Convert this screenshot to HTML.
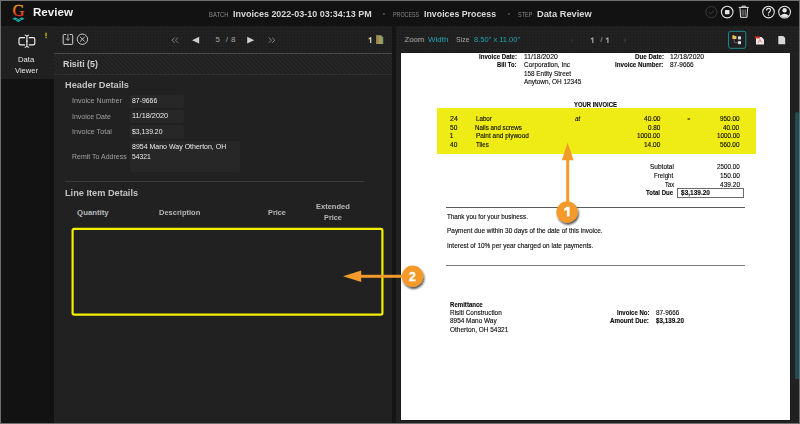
<!DOCTYPE html>
<html><head><meta charset="utf-8"><title>Review</title>
<style>
html,body{margin:0;padding:0;}
body{width:800px;height:424px;overflow:hidden;position:relative;background:#6e6e6e;font-family:"Liberation Sans",sans-serif;}
.a{position:absolute;}
.t{position:absolute;white-space:nowrap;transform-origin:0 0;font-family:"Liberation Sans",sans-serif;}
.grid{background-color:#222222;background-image:linear-gradient(to right,rgba(0,0,0,0.10) 1px,transparent 1px),linear-gradient(to bottom,rgba(0,0,0,0.10) 1px,transparent 1px);background-size:3px 3px;}
.hatch{background-color:#232323;background-image:repeating-linear-gradient(45deg,#1f1f1f 0px,#222 0.8px,#2a2a2a 1.6px,#222 2.4px,#1f1f1f 3.1px);}
.inp{background:#272727;border-radius:2px;}
.d{-webkit-text-stroke:0.12px #0a0a0a;}
svg{position:absolute;left:0;top:0;}
</style></head><body>
<!-- header -->
<div class="a" style="left:1px;top:1px;width:798px;height:25px;background:#121212"></div>
<!-- sidebar -->
<div class="a" style="left:1px;top:26px;width:53px;height:53px;background:#202020"></div>
<div class="a" style="left:1px;top:79px;width:53px;height:344px;background:#121212"></div>
<!-- left panel -->
<div class="a grid" style="left:54px;top:26px;width:338px;height:27px;"></div>
<div class="a" style="left:54px;top:53px;width:338px;height:1px;background:#474747"></div>
<div class="a hatch" style="left:54px;top:54px;width:338px;height:20px;"></div>
<div class="a" style="left:54px;top:74px;width:338px;height:1px;background:#303030"></div>
<div class="a" style="left:54px;top:75px;width:338px;height:348px;background:#212121"></div>
<div class="a" style="left:392px;top:26px;width:4px;height:397px;background:#141414"></div>
<!-- inputs -->
<div class="a inp" style="left:130px;top:95px;width:54px;height:13px;"></div>
<div class="a inp" style="left:130px;top:110px;width:54px;height:13px;"></div>
<div class="a inp" style="left:130px;top:125px;width:54px;height:13px;"></div>
<div class="a inp" style="left:130px;top:141px;width:110px;height:31px;"></div>
<div class="a" style="left:65px;top:181px;width:299px;height:1px;background:#3a3a3a"></div>

<!-- right panel -->
<div class="a grid" style="left:396px;top:26px;width:403px;height:27px;"></div>
<div class="a" style="left:396px;top:53px;width:403px;height:370px;background:#212121"></div>
<div class="a" style="left:401px;top:53px;width:389px;height:367px;background:#ffffff;box-shadow:0 0 0 1px #191919"></div>
<div class="a" style="left:795px;top:112px;width:4px;height:267px;background:#1d4e51;border-radius:2px 2px 0 0"></div>
<!-- doc shapes -->
<div class="a" style="left:437px;top:108px;width:319px;height:46px;background:#efec15"></div>
<div class="a" style="left:446px;top:207px;width:299px;height:1px;background:#5a5a5a"></div>
<div class="a" style="left:677px;top:188px;width:65px;height:7.5px;border:1px solid #6a6a6a"></div>
<div class="a" style="left:446px;top:265px;width:299px;height:1px;background:#7a7a7a"></div>
<div class="t" style="left:33.35px;top:7.15px;font-size:11.00px;line-height:11.00px;color:#f2f2f2;font-weight:700;transform:scaleX(1.0525);">Review</div>
<div class="t" style="left:208.55px;top:11.59px;font-size:6.90px;line-height:6.90px;color:#8a8a8a;transform:scaleX(0.8503);">BATCH</div>
<div class="t" style="left:232.60px;top:8.68px;font-size:9.70px;line-height:9.70px;color:#d9d9d9;font-weight:700;transform:scaleX(0.9258);">Invoices 2022-03-10 03:34:13 PM</div>
<div class="t" style="left:393.37px;top:11.52px;font-size:6.90px;line-height:6.90px;color:#8a8a8a;transform:scaleX(0.7751);">PROCESS</div>
<div class="t" style="left:424.07px;top:8.68px;font-size:9.70px;line-height:9.70px;color:#d9d9d9;font-weight:700;transform:scaleX(0.9103);">Invoices Process</div>
<div class="t" style="left:518.15px;top:11.56px;font-size:6.90px;line-height:6.90px;color:#8a8a8a;transform:scaleX(0.7954);">STEP</div>
<div class="t" style="left:536.99px;top:8.68px;font-size:9.70px;line-height:9.70px;color:#d9d9d9;font-weight:700;transform:scaleX(0.9576);">Data Review</div>
<div class="t" style="left:18.12px;top:55.68px;font-size:7.70px;line-height:7.70px;color:#e8e8e8;transform:scaleX(0.9928);">Data</div>
<div class="t" style="left:14.93px;top:66.88px;font-size:7.70px;line-height:7.70px;color:#e8e8e8;transform:scaleX(0.9839);">Viewer</div>
<div class="t" style="left:63.32px;top:58.53px;font-size:9.90px;line-height:9.90px;color:#cfcfcf;font-weight:700;transform:scaleX(0.8961);">Risiti (5)</div>
<div class="t" style="left:215.38px;top:35.98px;font-size:8.00px;line-height:8.00px;color:#a8a8a8;">5</div>
<div class="t" style="left:225.82px;top:35.98px;font-size:8.00px;line-height:8.00px;color:#a8a8a8;">/</div>
<div class="t" style="left:230.90px;top:35.98px;font-size:8.00px;line-height:8.00px;color:#a8a8a8;">8</div>
<div class="t" style="left:368.01px;top:36.23px;font-size:8.00px;line-height:8.00px;color:transparent;">1</div>
<div class="t" style="left:65.24px;top:79.93px;font-size:9.60px;line-height:9.60px;color:#c2c2c2;font-weight:700;transform:scaleX(0.9594);">Header Details</div>
<div class="t" style="left:72.29px;top:97.03px;font-size:7.40px;line-height:7.40px;color:#a0a0a0;transform:scaleX(0.9643);">Invoice Number</div>
<div class="t" style="left:72.32px;top:112.62px;font-size:7.40px;line-height:7.40px;color:#a0a0a0;transform:scaleX(0.9436);">Invoice Date</div>
<div class="t" style="left:72.26px;top:128.23px;font-size:7.40px;line-height:7.40px;color:#a0a0a0;transform:scaleX(0.9711);">Invoice Total</div>
<div class="t" style="left:72.17px;top:153.08px;font-size:7.40px;line-height:7.40px;color:#a0a0a0;transform:scaleX(0.9467);">Remit To Address</div>
<div class="t" style="left:131.84px;top:97.18px;font-size:7.40px;line-height:7.40px;color:#ececec;transform:scaleX(0.9303);">87-9666</div>
<div class="t" style="left:131.69px;top:112.11px;font-size:7.40px;line-height:7.40px;color:#ececec;transform:scaleX(0.9932);">11/18/2020</div>
<div class="t" style="left:131.58px;top:127.83px;font-size:7.40px;line-height:7.40px;color:#ececec;transform:scaleX(0.9269);">$3,139.20</div>
<div class="t" style="left:131.72px;top:143.18px;font-size:7.40px;line-height:7.40px;color:#ececec;transform:scaleX(0.9467);">8954 Mano Way Otherton, OH</div>
<div class="t" style="left:131.73px;top:153.08px;font-size:7.40px;line-height:7.40px;color:#ececec;transform:scaleX(0.9193);">54321</div>
<div class="t" style="left:64.79px;top:187.72px;font-size:9.60px;line-height:9.60px;color:#c2c2c2;font-weight:700;transform:scaleX(0.9583);">Line Item Details</div>
<div class="t" style="left:77.09px;top:208.53px;font-size:7.80px;line-height:7.80px;color:#b8b8b8;font-weight:700;">Quantity</div>
<div class="t" style="left:159.16px;top:208.77px;font-size:7.80px;line-height:7.80px;color:#b8b8b8;font-weight:700;transform:scaleX(0.9612);">Description</div>
<div class="t" style="left:268.00px;top:208.69px;font-size:7.80px;line-height:7.80px;color:#b8b8b8;font-weight:700;transform:scaleX(0.9382);">Price</div>
<div class="t" style="left:315.77px;top:202.71px;font-size:7.80px;line-height:7.80px;color:#b8b8b8;font-weight:700;transform:scaleX(0.9630);">Extended</div>
<div class="t" style="left:323.85px;top:213.69px;font-size:7.80px;line-height:7.80px;color:#b8b8b8;font-weight:700;transform:scaleX(0.9382);">Price</div>
<div class="t" style="left:404.43px;top:36.38px;font-size:7.80px;line-height:7.80px;color:#a8a8a8;">Zoom</div>
<div class="t" style="left:427.75px;top:36.38px;font-size:7.80px;line-height:7.80px;color:#22a5b3;transform:scaleX(1.0250);">Width</div>
<div class="t" style="left:456.30px;top:36.38px;font-size:7.80px;line-height:7.80px;color:#a8a8a8;transform:scaleX(0.8901);">Size</div>
<div class="t" style="left:474.33px;top:36.38px;font-size:7.80px;line-height:7.80px;color:#22a5b3;transform:scaleX(0.9638);">8.50" x 11.00"</div>
<div class="t" style="left:590.20px;top:36.18px;font-size:8.00px;line-height:8.00px;color:transparent;">1</div>
<div class="t" style="left:600.21px;top:36.18px;font-size:8.00px;line-height:8.00px;color:#a8a8a8;">/</div>
<div class="t" style="left:605.12px;top:36.18px;font-size:8.00px;line-height:8.00px;color:transparent;">1</div>
<div class="t d" style="left:478.71px;top:53.52px;font-size:6.70px;line-height:6.70px;color:#0a0a0a;font-weight:700;transform:scaleX(0.9140);">Invoice Date:</div>
<div class="t d" style="left:523.64px;top:53.86px;font-size:6.70px;line-height:6.70px;color:#0a0a0a;transform:scaleX(1.0244);">11/18/2020</div>
<div class="t d" style="left:497.37px;top:62.07px;font-size:6.70px;line-height:6.70px;color:#0a0a0a;font-weight:700;transform:scaleX(0.8773);">Bill To:</div>
<div class="t d" style="left:523.87px;top:61.84px;font-size:6.70px;line-height:6.70px;color:#0a0a0a;transform:scaleX(0.9677);">Corporation, Inc</div>
<div class="t d" style="left:523.67px;top:70.56px;font-size:6.70px;line-height:6.70px;color:#0a0a0a;transform:scaleX(0.9506);">158 Entity Street</div>
<div class="t d" style="left:523.75px;top:78.81px;font-size:6.70px;line-height:6.70px;color:#0a0a0a;transform:scaleX(0.9566);">Anytown, OH 12345</div>
<div class="t d" style="left:634.95px;top:53.56px;font-size:6.70px;line-height:6.70px;color:#0a0a0a;font-weight:700;transform:scaleX(0.9285);">Due Date:</div>
<div class="t d" style="left:669.55px;top:53.82px;font-size:6.70px;line-height:6.70px;color:#0a0a0a;transform:scaleX(1.0142);">12/18/2020</div>
<div class="t d" style="left:615.19px;top:61.94px;font-size:6.70px;line-height:6.70px;color:#0a0a0a;font-weight:700;transform:scaleX(0.9235);">Invoice Number:</div>
<div class="t d" style="left:670.42px;top:61.86px;font-size:6.70px;line-height:6.70px;color:#0a0a0a;transform:scaleX(0.9653);">87-9666</div>
<div class="t d" style="left:573.61px;top:101.88px;font-size:6.70px;line-height:6.70px;color:#0a0a0a;font-weight:700;transform:scaleX(0.8804);">YOUR INVOICE</div>
<div class="t d" style="left:449.67px;top:115.71px;font-size:6.70px;line-height:6.70px;color:#0a0a0a;transform:scaleX(1.0484);">24</div>
<div class="t d" style="left:475.60px;top:115.52px;font-size:6.70px;line-height:6.70px;color:#0a0a0a;transform:scaleX(0.9295);">Labor</div>
<div class="t d" style="left:575.02px;top:116.20px;font-size:6.70px;line-height:6.70px;color:#0a0a0a;font-style:italic;transform:scaleX(0.9535);">at</div>
<div class="t d" style="left:643.71px;top:115.71px;font-size:6.70px;line-height:6.70px;color:#0a0a0a;transform:scaleX(0.9853);">40.00</div>
<div class="t d" style="left:687.20px;top:116.83px;font-size:5.00px;line-height:5.00px;color:#0a0a0a;">=</div>
<div class="t d" style="left:720.17px;top:115.71px;font-size:6.70px;line-height:6.70px;color:#0a0a0a;transform:scaleX(0.9520);">950.00</div>
<div class="t d" style="left:449.87px;top:124.77px;font-size:6.70px;line-height:6.70px;color:#0a0a0a;transform:scaleX(0.9844);">50</div>
<div class="t d" style="left:475.34px;top:124.64px;font-size:6.70px;line-height:6.70px;color:#0a0a0a;transform:scaleX(0.9277);">Nails and screws</div>
<div class="t d" style="left:647.70px;top:124.79px;font-size:6.70px;line-height:6.70px;color:#0a0a0a;transform:scaleX(0.9521);">0.80</div>
<div class="t d" style="left:723.21px;top:124.80px;font-size:6.70px;line-height:6.70px;color:#0a0a0a;transform:scaleX(0.9578);">40.00</div>
<div class="t d" style="left:449.49px;top:132.97px;font-size:6.70px;line-height:6.70px;color:#0a0a0a;">1</div>
<div class="t d" style="left:475.71px;top:133.06px;font-size:6.70px;line-height:6.70px;color:#0a0a0a;transform:scaleX(0.9680);">Paint and plywood</div>
<div class="t d" style="left:636.74px;top:133.06px;font-size:6.70px;line-height:6.70px;color:#0a0a0a;transform:scaleX(0.9570);">1000.00</div>
<div class="t d" style="left:716.55px;top:133.07px;font-size:6.70px;line-height:6.70px;color:#0a0a0a;transform:scaleX(0.9434);">1000.00</div>
<div class="t d" style="left:449.59px;top:141.65px;font-size:6.70px;line-height:6.70px;color:#0a0a0a;transform:scaleX(0.9762);">40</div>
<div class="t d" style="left:475.65px;top:141.81px;font-size:6.70px;line-height:6.70px;color:#0a0a0a;transform:scaleX(0.9164);">Tiles</div>
<div class="t d" style="left:643.83px;top:141.71px;font-size:6.70px;line-height:6.70px;color:#0a0a0a;transform:scaleX(0.9720);">14.00</div>
<div class="t d" style="left:720.33px;top:141.68px;font-size:6.70px;line-height:6.70px;color:#0a0a0a;transform:scaleX(0.9492);">560.00</div>
<div class="t d" style="left:650.35px;top:163.73px;font-size:6.70px;line-height:6.70px;color:#0a0a0a;transform:scaleX(0.9732);">Subtotal</div>
<div class="t d" style="left:716.95px;top:163.73px;font-size:6.70px;line-height:6.70px;color:#0a0a0a;transform:scaleX(0.9367);">2500.00</div>
<div class="t d" style="left:654.31px;top:172.87px;font-size:6.70px;line-height:6.70px;color:#0a0a0a;transform:scaleX(0.9264);">Freight</div>
<div class="t d" style="left:719.55px;top:172.90px;font-size:6.70px;line-height:6.70px;color:#0a0a0a;transform:scaleX(0.9745);">150.00</div>
<div class="t d" style="left:664.71px;top:181.70px;font-size:6.70px;line-height:6.70px;color:#0a0a0a;transform:scaleX(0.8884);">Tax</div>
<div class="t d" style="left:719.86px;top:181.59px;font-size:6.70px;line-height:6.70px;color:#0a0a0a;transform:scaleX(0.9817);">439.20</div>
<div class="t d" style="left:646.13px;top:190.43px;font-size:6.70px;line-height:6.70px;color:#0a0a0a;font-weight:700;transform:scaleX(0.9036);">Total Due</div>
<div class="t d" style="left:680.55px;top:190.41px;font-size:6.70px;line-height:6.70px;color:#0a0a0a;font-weight:700;transform:scaleX(0.9747);">$3,139.20</div>
<div class="t d" style="left:446.62px;top:214.35px;font-size:6.70px;line-height:6.70px;color:#0a0a0a;transform:scaleX(0.9423);">Thank you for your business.</div>
<div class="t d" style="left:446.67px;top:228.06px;font-size:6.70px;line-height:6.70px;color:#0a0a0a;transform:scaleX(0.9644);">Payment due within 30 days of the date of this invoice.</div>
<div class="t d" style="left:446.83px;top:242.71px;font-size:6.70px;line-height:6.70px;color:#0a0a0a;transform:scaleX(0.9624);">Interest of 10% per year charged on late payments.</div>
<div class="t d" style="left:450.17px;top:301.70px;font-size:6.70px;line-height:6.70px;color:#0a0a0a;font-weight:700;transform:scaleX(0.9083);">Remittance</div>
<div class="t d" style="left:450.32px;top:309.94px;font-size:6.70px;line-height:6.70px;color:#0a0a0a;transform:scaleX(0.9603);">Risiti Construction</div>
<div class="t d" style="left:450.42px;top:318.21px;font-size:6.70px;line-height:6.70px;color:#0a0a0a;transform:scaleX(0.9634);">8954 Mano Way</div>
<div class="t d" style="left:450.15px;top:326.95px;font-size:6.70px;line-height:6.70px;color:#0a0a0a;transform:scaleX(0.9674);">Otherton, OH 54321</div>
<div class="t d" style="left:616.72px;top:310.05px;font-size:6.70px;line-height:6.70px;color:#0a0a0a;font-weight:700;transform:scaleX(0.9015);">Invoice No:</div>
<div class="t d" style="left:655.77px;top:309.91px;font-size:6.70px;line-height:6.70px;color:#0a0a0a;transform:scaleX(0.9484);">87-9666</div>
<div class="t d" style="left:610.13px;top:318.38px;font-size:6.70px;line-height:6.70px;color:#0a0a0a;font-weight:700;transform:scaleX(0.9268);">Amount Due:</div>
<div class="t d" style="left:656.44px;top:318.41px;font-size:6.70px;line-height:6.70px;color:#0a0a0a;font-weight:700;transform:scaleX(0.9412);">$3,139.20</div>
<svg width="800" height="424" viewBox="0 0 800 424">
 <defs>
  <linearGradient id="gg" gradientUnits="userSpaceOnUse" x1="0" y1="5" x2="0" y2="17">
   <stop offset="0" stop-color="#e9a21c"/><stop offset="0.45" stop-color="#e8701e"/><stop offset="1" stop-color="#e0221c"/>
  </linearGradient>
  <filter id="sh" x="-30%" y="-30%" width="160%" height="160%">
   <feGaussianBlur in="SourceAlpha" stdDeviation="0.9"/>
   <feOffset dx="1.1" dy="1.5" result="o"/>
   <feComponentTransfer><feFuncA type="linear" slope="0.7"/></feComponentTransfer>
   <feMerge><feMergeNode/><feMergeNode in="SourceGraphic"/></feMerge>
  </filter>
 </defs>
 <rect x="72.6" y="228.9" width="309.8" height="85.8" rx="1.6" fill="none" stroke="#f2f000" stroke-width="2.2"/>
 <!-- logo -->
 <text x="18.5" y="16.4" text-anchor="middle" font-family="Liberation Serif" font-size="16.4" fill="url(#gg)" stroke="url(#gg)" stroke-width="0.35">G</text>
 <g fill="#19afa6">
  <path d="M12.4 18.8 L15.2 17.3 L18 18.8 L15.2 20.3 Z"/>
  <path d="M19 18.8 L21.8 17.3 L24.6 18.8 L21.8 20.3 Z"/>
  <path d="M15.6 20.4 L18.4 18.9 L21.2 20.4 L18.4 21.9 Z"/>
 </g>
 <rect x="383.3" y="13.3" width="1.3" height="1.3" fill="#8a8a8a"/>
 <rect x="508.3" y="13.3" width="1.3" height="1.3" fill="#8a8a8a"/>
 <!-- header right icons -->
 <circle cx="711.4" cy="12.1" r="5.6" fill="none" stroke="#3a3a3a" stroke-width="1"/>
 <path d="M708.8 12.2 L710.7 14.1 L714.2 10.2" fill="none" stroke="#3a3a3a" stroke-width="1"/>
 <circle cx="727.2" cy="12.1" r="5.8" fill="none" stroke="#e6e6e6" stroke-width="1.1"/>
 <rect x="724.9" y="9.9" width="4.6" height="4.4" rx="0.8" fill="#e6e6e6"/>
 <g fill="none" stroke="#e6e6e6" stroke-width="1">
  <path d="M738.8 7.4 H748.8"/>
  <path d="M742 7.2 V6.2 H745.6 V7.2"/>
  <path d="M740 8.2 L740.6 17.3 H747 L747.6 8.2"/>
 </g>
 <g stroke="#d0d0d0" stroke-width="0.55">
  <path d="M742.2 9.6 V15.8 M743.8 9.6 V15.8 M745.4 9.6 V15.8"/>
 </g>
 <circle cx="768.5" cy="12.1" r="5.8" fill="none" stroke="#e6e6e6" stroke-width="1.1"/>
 <path d="M766.5 10.4 Q766.5 8.3 768.5 8.3 Q770.5 8.3 770.5 10.1 Q770.5 11.3 769.3 11.9 Q768.5 12.4 768.5 13.5" fill="none" stroke="#e6e6e6" stroke-width="1.15"/>
 <rect x="767.9" y="14.5" width="1.2" height="1.2" fill="#e6e6e6"/>
 <circle cx="784.6" cy="12.1" r="5.9" fill="none" stroke="#e6e6e6" stroke-width="1.1"/>
 <circle cx="784.6" cy="10.2" r="2.2" fill="#e6e6e6"/>
 <path d="M780.3 15.8 Q784.6 11.8 788.9 15.8 Q784.6 19.2 780.3 15.8 Z" fill="#e6e6e6"/>
 <!-- sidebar icon -->
 <g fill="none" stroke="#f2f2f2" stroke-width="1.15">
  <path d="M25.0 37.6 H20.6 Q19.0 37.6 19.0 39.2 V43.2 Q19.0 44.8 20.6 44.8 H25.0"/>
  <path d="M28.8 37.6 H33.2 Q34.8 37.6 34.8 39.2 V43.2 Q34.8 44.8 33.2 44.8 H28.8"/>
  <path d="M26.9 36 V46.4"/>
  <path d="M24.7 35.1 Q26.9 35.1 26.9 36.4 Q26.9 35.1 29.1 35.1 M24.7 47.3 Q26.9 47.3 26.9 46 Q26.9 47.3 29.1 47.3" stroke-width="1"/>
  <path d="M26 41.2 H27.8" stroke-width="0.9"/>
 </g>
 <rect x="45.4" y="32.7" width="1.3" height="3.6" fill="#c8c400"/>
 <rect x="45.4" y="37" width="1.3" height="1.2" fill="#c8c400"/>
 <!-- left toolbar icons -->
 <g fill="none" stroke="#c8c8c8" stroke-width="1">
  <path d="M66.2 34.5 H64.1 Q63.2 34.5 63.2 35.4 V43.6 Q63.2 44.4 64.1 44.4 H71.9 Q72.7 44.4 72.7 43.6 V35.4 Q72.7 34.5 71.9 34.5 H69.6" stroke="#cfcfcf"/>
  <path d="M67.9 34.0 V40.2" stroke-width="0.85"/>
  <path d="M66.1 38.5 L67.9 40.5 L69.7 38.5" stroke-width="0.85"/>
  <circle cx="82.4" cy="39.2" r="5.2"/>
  <path d="M80.2 37 L84.6 41.4 M84.6 37 L80.2 41.4"/>
 </g>
 <!-- nav -->
 <g fill="none" stroke="#8a8a8a" stroke-width="0.9">
  <path d="M174.6 37.6 L172 40.2 L174.6 42.8 M178 37.6 L175.4 40.2 L178 42.8"/>
  <path d="M268.8 37.6 L271.4 40.2 L268.8 42.8 M272.2 37.6 L274.8 40.2 L272.2 42.8"/>
 </g>
 <path d="M192 40.2 L199.2 36.8 V43.6 Z" fill="#cfcfcf"/>
 <path d="M254.2 40.2 L247.2 36.8 V43.6 Z" fill="#cfcfcf"/>
 <path d="M370.1 37.3 H371.3 V43 H370.1 V38.9 L368.6 39.6 V38.4 Z" fill="#e6dcb4"/>
 <path d="M592.2 37.5 H593.4 V42.9 H592.2 V39.1 L590.8 39.8 V38.6 Z" fill="#a8a8a8"/>
 <path d="M607.3 37.5 H608.5 V42.9 H607.3 V39.1 L605.9 39.8 V38.6 Z" fill="#a8a8a8"/>
 <!-- small doc icon -->
 <path d="M376.2 35.2 H381 L383.2 37.4 V44 H376.2 Z" fill="#a99d5c"/>
 <path d="M378 36 V43.4" stroke="#7a6f3a" stroke-width="0.8"/>
 <path d="M380.6 36 L382.6 38 V43.4" stroke="#3aa38a" stroke-width="0.6" fill="none"/>
 <!-- right toolbar: disabled arrows -->
 <path d="M624 38 L627 40.2 L624 42.4 Z" fill="#333"/>
 <path d="M573 38 L570 40.2 L573 42.4 Z" fill="#2e2e2e"/>
 <!-- right icons -->
 <rect x="728.6" y="31.3" width="17.2" height="17" rx="2" fill="none" stroke="#1e8d93" stroke-width="1"/>
 <rect x="732.4" y="36" width="4" height="3" fill="#e8c060"/>
 <rect x="732.4" y="35.2" width="2" height="1" fill="#e8c060"/>
 <rect x="738" y="36.4" width="3" height="3" fill="#e0e0e0"/>
 <rect x="738" y="41.2" width="3" height="3" fill="#e0e0e0"/>
 <path d="M734.2 39 V42.6 H738" stroke="#888" stroke-width="0.6" fill="none"/>
 <path d="M756 37 H761.5 L764 39.5 V44.4 H756 Z" fill="#ececec"/>
 <rect x="754.8" y="36.4" width="5" height="2" fill="#e02a1e"/>
 <path d="M758 43 Q759.5 40 760 39.4 Q760.6 41.8 762.3 42.6" stroke="#e02a1e" stroke-width="0.6" fill="none"/>
 <path d="M778.3 36 H783.2 L785.2 38 V44.2 H778.3 Z" fill="#d8d8d8"/>
 <!-- arrows & badges -->
 <g fill="#f39a2b">
  <rect x="566.2" y="158" width="3" height="45"/>
  <path d="M567.6 142.5 L573.6 160.2 L561.8 160.2 Z"/>
  <rect x="360" y="274.8" width="43" height="3"/>
  <path d="M343 276.25 L361.2 270.4 L361.2 282.1 Z"/>
  <circle cx="567.1" cy="212" r="10.7" filter="url(#sh)"/>
  <circle cx="412.6" cy="276.3" r="10.7" filter="url(#sh)"/>
 </g>
 <path d="M566.9 206.8 H569.5 V216.5 H566.9 V209.9 L564.2 211 V208.5 Z" fill="#ffffff"/>
 <text x="412.5" y="280.7" text-anchor="middle" font-family="Liberation Sans" font-weight="700" font-size="12.4" fill="#ffffff" stroke="#ffffff" stroke-width="0.3">2</text>
</svg>
</body></html>
